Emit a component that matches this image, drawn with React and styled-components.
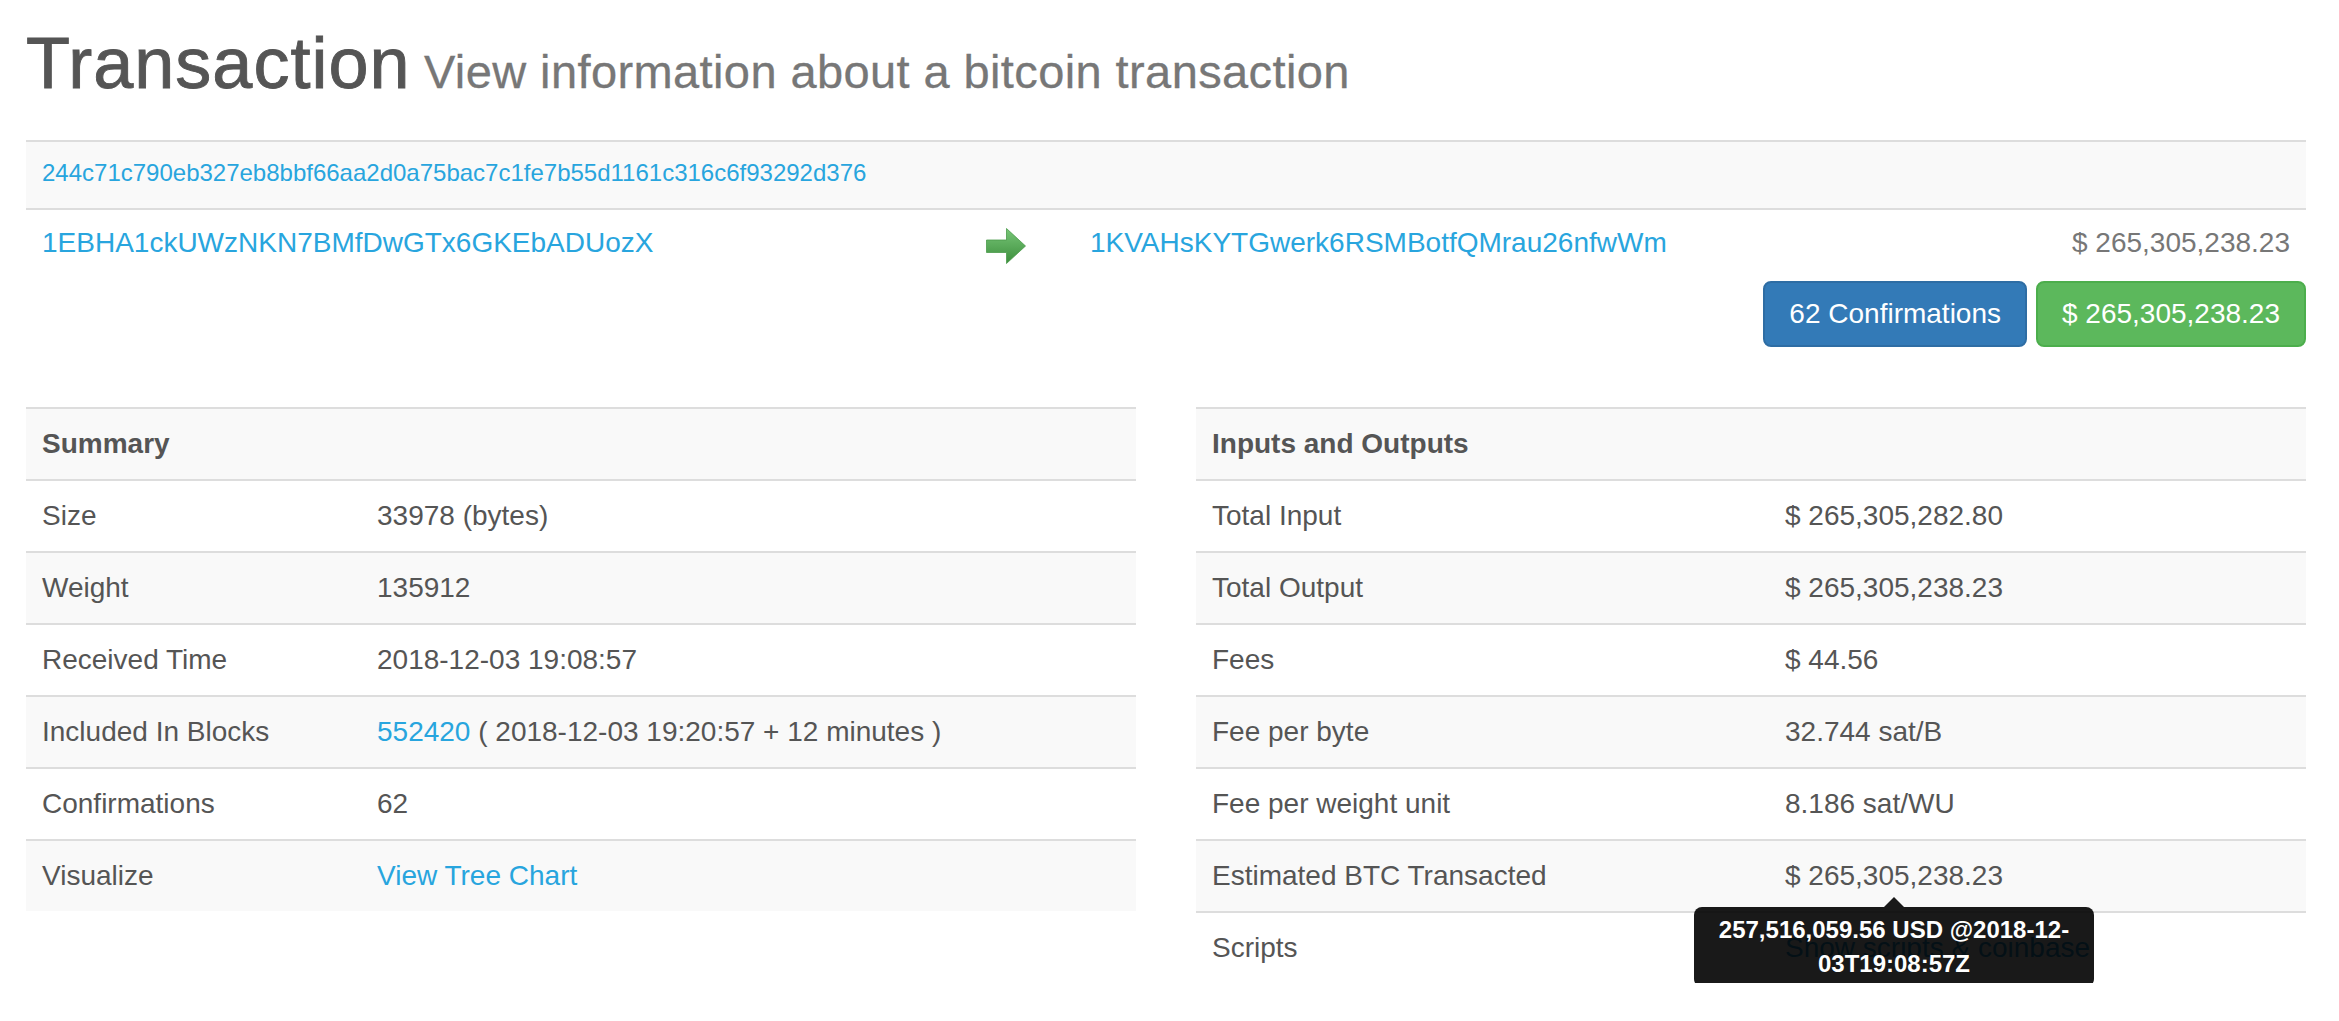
import React from 'react'
import styled, { createGlobalStyle } from 'styled-components'

const GlobalStyle = createGlobalStyle`
  body {
    margin: 0;
    background: #fff;
    font-family: "Liberation Sans", Arial, Helvetica, sans-serif;
    font-size: 28px;
    line-height: 40px;
    color: #555;
  }
  a {
    color: #28a5de;
    text-decoration: none;
  }
`

const Page = styled.div`
  padding: 23px 33px 0 26px;
`

const Title = styled.h1`
  margin: 0 0 37px;
  font-size: 72px;
  line-height: 80px;
  font-weight: 500;
  color: #555;
  letter-spacing: 1px;
  -webkit-text-stroke: 0.9px #555;
`

const Subtitle = styled.small`
  font-size: 47px;
  line-height: 1;
  font-weight: 400;
  color: #777;
  letter-spacing: 0.4px;
  -webkit-text-stroke: 0.3px #777;
`

const HashBlock = styled.div`
  border-top: 2px solid #ddd;
  border-bottom: 2px solid #ddd;
  background: #f9f9f9;
  padding: 14px 16px 18px;
  font-size: 24px;
  line-height: 34px;
`

const AddressRow = styled.div`
  display: grid;
  grid-template-columns: 944px 104px 1fr auto;
  align-items: start;
  padding: 13px 16px 0;
`

const Arrow = styled.svg`
  display: block;
  margin-top: 5px;
`

const Amount = styled.span`
  color: #777;
`

const ButtonRow = styled.div`
  display: flex;
  justify-content: flex-end;
  gap: 9px;
  margin-top: 17px;
`

const Button = styled.span`
  display: inline-block;
  padding: 11px 24px;
  border: 2px solid ${p => p.$border};
  border-radius: 8px;
  background: ${p => p.$bg};
  color: #fff;
  line-height: 40px;
`

const Panels = styled.div`
  display: grid;
  grid-template-columns: 1fr 1fr;
  align-items: start;
  gap: 60px;
  margin-top: 60px;
`

const Table = styled.table`
  width: 100%;
  border-collapse: separate;
  border-spacing: 0;

  tr:nth-child(odd) {
    background: #f9f9f9;
  }
  th, td {
    border-top: 2px solid #ddd;
    padding: 15px 16px;
    line-height: 40px;
    text-align: left;
    vertical-align: top;
  }
  th {
    font-weight: 700;
  }
  td:first-child {
    box-sizing: border-box;
    width: ${p => p.$labelWidth}px;
  }
`

const TipAnchor = styled.span`
  position: relative;
  display: inline-block;
`

const Tooltip = styled.div`
  position: absolute;
  top: calc(100% + 1px);
  left: 50%;
  transform: translateX(-50%);
  padding-top: 10px;
  z-index: 5;
`

const TipArrow = styled.div`
  position: absolute;
  top: 0;
  left: 50%;
  margin-left: -10px;
  width: 0;
  height: 0;
  border-style: solid;
  border-color: transparent transparent rgba(0, 0, 0, 0.9);
  border-width: 0 10px 10px;
`

const TipBody = styled.div`
  box-sizing: border-box;
  width: 400px;
  padding: 6px 16px;
  border-radius: 8px;
  background: rgba(0, 0, 0, 0.9);
  color: #fff;
  font-size: 24px;
  line-height: 34px;
  font-weight: 700;
  text-align: center;
  white-space: nowrap;
`

const GreenArrow = () => (
  <Arrow width="40" height="36" viewBox="0 0 40 36">
    <defs>
      <linearGradient id="arrowGreen" x1="0" y1="0" x2="0" y2="1">
        <stop offset="0" stopColor="#78c678" />
        <stop offset="1" stopColor="#3c8e3c" />
      </linearGradient>
    </defs>
    <path
      d="M0.5 12 H20.5 V0.5 L39.5 18 L20.5 35.5 V24.5 H0.5 Z"
      fill="url(#arrowGreen)"
      stroke="#4a9a4a"
      strokeWidth="0.8"
    />
  </Arrow>
)

const summary = [
  ['Size', '33978 (bytes)'],
  ['Weight', '135912'],
  ['Received Time', '2018-12-03 19:08:57'],
  ['Included In Blocks', <><a href="#">552420</a> ( 2018-12-03 19:20:57 + 12 minutes )</>],
  ['Confirmations', '62'],
  ['Visualize', <a href="#">View Tree Chart</a>],
]

const io = [
  ['Total Input', '$ 265,305,282.80'],
  ['Total Output', '$ 265,305,238.23'],
  ['Fees', '$ 44.56'],
  ['Fee per byte', '32.744 sat/B'],
  ['Fee per weight unit', '8.186 sat/WU'],
  ['Estimated BTC Transacted', (
    <TipAnchor>
      $ 265,305,238.23
      <Tooltip>
        <TipArrow />
        <TipBody>
          257,516,059.56 USD @2018-12-<br />03T19:08:57Z
        </TipBody>
      </Tooltip>
    </TipAnchor>
  )],
  ['Scripts', <a href="#">Show scripts &amp; coinbase</a>],
]

const InfoTable = ({ title, rows, labelWidth }) => (
  <Table $labelWidth={labelWidth}>
    <tbody>
      <tr>
        <th colSpan={2}>{title}</th>
      </tr>
      {rows.map(([label, value]) => (
        <tr key={label}>
          <td>{label}</td>
          <td>{value}</td>
        </tr>
      ))}
    </tbody>
  </Table>
)

export default function App() {
  return (
    <Page>
      <GlobalStyle />
      <Title>
        Transaction<Subtitle> View information about a bitcoin transaction</Subtitle>
      </Title>

      <HashBlock>
        <a href="#">244c71c790eb327eb8bbf66aa2d0a75bac7c1fe7b55d1161c316c6f93292d376</a>
      </HashBlock>

      <AddressRow>
        <a href="#">1EBHA1ckUWzNKN7BMfDwGTx6GKEbADUozX</a>
        <GreenArrow />
        <a href="#">1KVAHsKYTGwerk6RSMBotfQMrau26nfwWm</a>
        <Amount>$ 265,305,238.23</Amount>
      </AddressRow>

      <ButtonRow>
        <Button $bg="#337ab7" $border="#2e6da4">62 Confirmations</Button>
        <Button $bg="#5cb85c" $border="#4cae4c">$ 265,305,238.23</Button>
      </ButtonRow>

      <Panels>
        <InfoTable title="Summary" rows={summary} labelWidth={335} />
        <InfoTable title="Inputs and Outputs" rows={io} labelWidth={573} />
      </Panels>
    </Page>
  )
}
